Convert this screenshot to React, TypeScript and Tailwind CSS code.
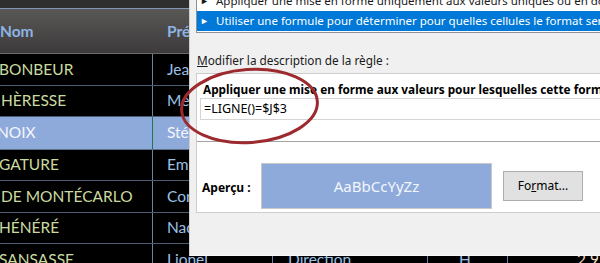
import React from "react";

type Row = {
  a: string;
  b: string;
  c?: string;
  d?: string;
  e?: string;
  h: string;
  sel?: boolean;
  shift?: string;
};

const rows: Row[] = [
  { a: "BONBEUR", b: "Jean", h: "h-[32px]", shift: "-ml-[1px]" },
  { a: "HÈRESSE", b: "Mélanie", h: "h-[31px]", shift: "ml-[1px]" },
  { a: "NOIX", b: "Stéphane", h: "h-[33px]", sel: true, shift: "-ml-[3px]" },
  { a: "GATURE", b: "Emma", h: "h-[31px]", shift: "-ml-[1px]" },
  { a: "DE MONTÉCARLO", b: "Corinne", h: "h-[32px]", shift: "ml-[1px]" },
  { a: "HÉNÉRÉ", b: "Nadine", h: "h-[31px]", shift: "-ml-[1px]" },
  { a: "SANSASSE", b: "Lionel", c: "Direction", d: "H", e: "2 950,00 €", h: "h-[32px]", shift: "-ml-[1px]" },
];

function Sheet() {
  return (
    <div className="flex flex-col w-[600px] bg-black font-['Lato',sans-serif] text-[15.5px]">
      <div className="h-[8px] bg-[#2f2f2f]" />
      <div className="h-px bg-[#8396b8]" />
      <div className="h-[45px] flex items-center pt-[2px] bg-gradient-to-b from-[#5a5757] to-[#3c3a3a] border-b border-[#6b6868] font-bold text-[#8db4e2]">
        <div className="w-[153px] pl-0">Nom</div>
        <div className="w-[120px] pl-[14px]">Prénom</div>
        <div className="w-[155px] pl-[15px]">Service</div>
        <div className="w-[80px] pl-[20px]">Sexe</div>
        <div className="flex-1 pl-[20px]">Salaire</div>
      </div>
      {rows.map((r, i) => (
        <div
          key={i}
          className={`${r.h} flex border-b ${r.sel ? "bg-[#8eaadb] border-[#5e6f8c]" : "border-[#4e5c74]"}`}
        >
          <div
            className={`w-[153px] flex items-center border-r overflow-hidden whitespace-nowrap ${
              r.sel ? "border-[#1f7a45] text-[#f4f6fb]" : "border-[#6a82a8] text-[#cadb9f]"
            }`}
          >
            <span className={r.shift}>{r.a}</span>
          </div>
          <div
            className={`w-[120px] flex items-center pl-[14px] border-r whitespace-nowrap overflow-hidden ${
              r.sel ? "border-[#6a82a8] text-[#f4f6fb]" : "border-[#6a82a8] text-[#9bc2e6]"
            }`}
          >
            {r.b}
          </div>
          <div className="w-[155px] flex items-center pl-[15px] border-r border-[#6a82a8] text-[#9bc2e6] whitespace-nowrap">
            {r.c ?? ""}
          </div>
          <div className="w-[80px] flex items-center pl-[31px] border-r border-[#6a82a8] text-[#9bc2e6]">
            {r.d ?? ""}
          </div>
          <div className="flex-1 flex items-center pl-[69px] text-[#f1dcc4] whitespace-nowrap overflow-hidden">
            {r.e ?? ""}
          </div>
        </div>
      ))}
    </div>
  );
}

function Dialog() {
  return (
    <div className="absolute left-[189px] top-0 w-[440px] h-[256px] bg-[#f0f0f0] border-l border-[#cfcfcf] border-b border-b-[#f7f7f7] pl-[6px] font-['Noto_Sans',sans-serif] text-[12px] text-black overflow-hidden">
      {/* rule type listbox */}
      <div className="-mt-[11px] border border-[#8c8f96] bg-white pb-[1px] whitespace-nowrap overflow-hidden text-[11.5px]">
        <div className="h-[21px] flex items-center pl-[3px] text-[#1a1a1a] leading-[16px]">
          <span className="shrink-0 w-[16px] text-[9px]">►</span>
          <span className="shrink-0">Appliquer une mise en forme uniquement aux valeurs uniques ou en double</span>
        </div>
        <div className="h-[20px] flex items-center pl-[3px] bg-[#0078d7] text-white leading-[16px]">
          <span className="shrink-0 w-[16px] text-[9px]">►</span>
          <span className="shrink-0">Utiliser une formule pour déterminer pour quelles cellules le format sera appliqué</span>
        </div>
      </div>

      <div className="h-[40px] flex items-end pb-[3px] pl-[1px] text-[#1a1a1a] text-[11.8px]">
        <span>
          <span className="underline">M</span>odifier la description de la règle :
        </span>
      </div>

      {/* description panel */}
      <div className="border border-[#cdcdcd] bg-white">
        <div className="pt-[6px] pl-[6px] h-[24px] leading-[18px] font-bold whitespace-nowrap text-[11.8px]">
          Appliquer une mise en forme aux valeurs pour lesquelles cette formule est vraie :
        </div>
        <div className="ml-[3px] h-[22px] flex items-center pl-[3px] border border-r-0 border-[#d4d4d4] bg-white whitespace-nowrap text-[12.5px]">
          =LIGNE()=$J$3
        </div>
        <div className="mt-[21px] h-px bg-[#a3a3a3]" />
        <div className="flex items-center pl-[5px] pt-[21px] pb-[3px]">
          <div className="w-[59px] font-bold pt-[4px]">Aperçu :</div>
          <div className="w-[231px] h-[46px] flex items-center justify-center bg-[#8eaadb] border border-[#c8c8c8] text-[15px] text-[#f3f6fb]">
            AaBbCcYyZz
          </div>
          <button className="ml-[11px] w-[80px] h-[30px] bg-[#e1e1e1] border border-[#adadad] flex items-center justify-center text-[12px]">
            <span>
              Fo<span className="underline">r</span>mat...
            </span>
          </button>
        </div>
      </div>
    </div>
  );
}

export default function App() {
  return (
    <div className="relative w-[600px] h-[263px] overflow-hidden bg-black">
      <Sheet />
      <Dialog />
      <svg className="absolute left-0 top-0 pointer-events-none" width="600" height="263">
        <ellipse
          cx="249.5"
          cy="106"
          rx="68"
          ry="36.5"
          transform="rotate(-4 249.5 106)"
          fill="none"
          stroke="#9c2a2f"
          strokeWidth="3"
        />
      </svg>
    </div>
  );
}
